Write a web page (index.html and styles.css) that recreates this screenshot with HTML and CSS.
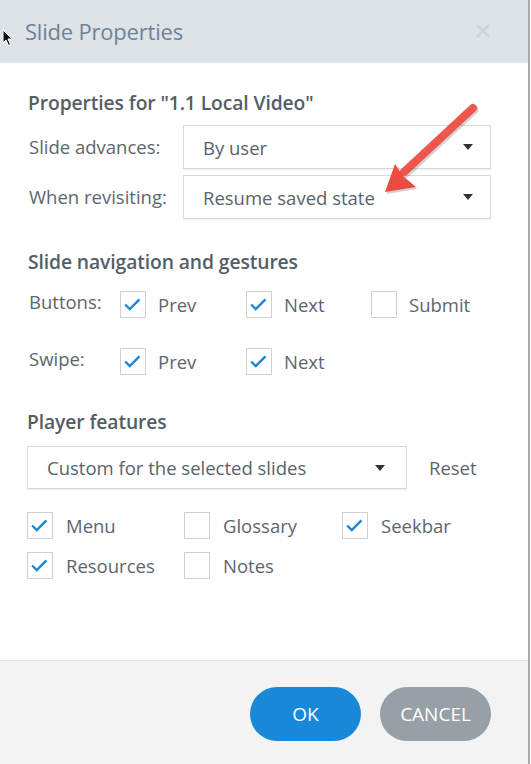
FILE: index.html
```html
<!DOCTYPE html>
<html lang="en">
<head>
<meta charset="utf-8">
<title>Slide Properties</title>
<link rel="stylesheet" href="styles.css">
</head>
<body>
<div class="dialog">
  <header class="header">
    <h1 class="title">Slide Properties</h1>
    <svg class="close" viewBox="0 0 14 14" width="14" height="14"><path d="M1 1 L13 13 M13 1 L1 13"/></svg>
  </header>
  <main class="content">
    <h2 class="heading">Properties for "1.1 Local Video"</h2>
    <div class="props">
      <span class="label">Slide advances:</span>
      <div class="select"><span>By user</span><span class="caret"></span></div>
      <span class="label">When revisiting:</span>
      <div class="select"><span>Resume saved state</span><span class="caret"></span></div>
    </div>

    <h2 class="heading heading-nav">Slide navigation and gestures</h2>
    <div class="nav">
      <span class="nav-label">Buttons:</span>
      <label class="check"><span class="box on"><svg viewBox="0 0 26 26"><polyline points="4.5,13 9.5,18 20,7.5"/></svg></span>Prev</label>
      <label class="check"><span class="box on"><svg viewBox="0 0 26 26"><polyline points="4.5,13 9.5,18 20,7.5"/></svg></span>Next</label>
      <label class="check"><span class="box"></span>Submit</label>
      <span class="nav-label">Swipe:</span>
      <label class="check"><span class="box on"><svg viewBox="0 0 26 26"><polyline points="4.5,13 9.5,18 20,7.5"/></svg></span>Prev</label>
      <label class="check"><span class="box on"><svg viewBox="0 0 26 26"><polyline points="4.5,13 9.5,18 20,7.5"/></svg></span>Next</label>
    </div>

    <h2 class="heading heading-player">Player features</h2>
    <div class="player-row">
      <div class="select select-wide"><span>Custom for the selected slides</span><span class="caret"></span></div>
      <span class="reset">Reset</span>
    </div>
    <div class="features">
      <label class="check"><span class="box on"><svg viewBox="0 0 26 26"><polyline points="4.5,13 9.5,18 20,7.5"/></svg></span>Menu</label>
      <label class="check"><span class="box"></span>Glossary</label>
      <label class="check"><span class="box on"><svg viewBox="0 0 26 26"><polyline points="4.5,13 9.5,18 20,7.5"/></svg></span>Seekbar</label>
      <label class="check"><span class="box on"><svg viewBox="0 0 26 26"><polyline points="4.5,13 9.5,18 20,7.5"/></svg></span>Resources</label>
      <label class="check"><span class="box"></span>Notes</label>
    </div>
  </main>
  <footer class="footer">
    <button class="btn btn-ok">OK</button>
    <button class="btn btn-cancel">CANCEL</button>
  </footer>

  <svg class="annot-arrow" viewBox="0 0 531 764" width="531" height="764">
    <defs>
      <linearGradient id="ag" x1="0" y1="0" x2="1" y2="1">
        <stop offset="0" stop-color="#f4685d"/>
        <stop offset="1" stop-color="#e8443c"/>
      </linearGradient>
    </defs>
    <g transform="translate(1.5,2)" opacity="0.25" fill="#555" stroke="#555">
      <line x1="473" y1="108" x2="404" y2="172" stroke-width="8" stroke-linecap="round"/>
      <path d="M385 192 L395 164 L403 176 L416 187 Z" stroke="none"/>
    </g>
    <line x1="473" y1="108" x2="404" y2="172" stroke="url(#ag)" stroke-width="8" stroke-linecap="round"/>
    <path d="M385 192 L395 164 L403 176 L416 187 Z" fill="#ec4b42"/>
  </svg>

  <svg class="cursor" viewBox="0 0 12 18" width="12" height="18">
    <path d="M1 1 L1 14 L4 11 L6.5 16.5 L8.5 15.5 L6 10 L10 10 Z" fill="#111" stroke="#fff" stroke-width="1"/>
  </svg>
</div>
</body>
</html>
```

FILE: styles.css
```css
* { box-sizing: border-box; }

html, body {
  margin: 0;
  padding: 0;
  background: #ffffff;
}

body {
  width: 531px;
  height: 764px;
  overflow: hidden;
  font-family: "Open Sans", "Noto Sans", "DejaVu Sans", sans-serif;
  color: #5d666f;
}

.dialog {
  position: relative;
  width: 530px;
  height: 764px;
  display: flex;
  flex-direction: column;
  border-right: 2px solid #a8abae;
  background: #ffffff;
}

.header {
  height: 63px;
  flex: none;
  background: #dee3e8;
  display: flex;
  align-items: center;
  justify-content: space-between;
  padding: 0 38px 2px 25px;
}

.title {
  margin: 0;
  font-size: 22px;
  font-weight: 400;
  color: #6f8295;
  letter-spacing: -0.2px;
}

.close {
  fill: none;
  stroke: #cfd5da;
  stroke-width: 2.6;
}

.content {
  flex: 1;
  padding: 27px 37px 0 28px;
}

.heading {
  margin: 0;
  font-size: 19.3px;
  line-height: 26px;
  font-weight: 600;
  color: #545d66;
  letter-spacing: -0.1px;
}

.heading-nav { margin-top: 30px; }
.heading-player { margin-top: 34px; margin-left: -1px; }

.props {
  margin-top: 9px;
  display: grid;
  grid-template-columns: 155px 308px;
  row-gap: 6px;
  align-items: center;
}

.label {
  font-size: 18.5px;
  padding-left: 1px;
  margin-top: -2px;
}

.select {
  height: 44px;
  border: 1px solid #d5dade;
  box-shadow: 0 1px 1px rgba(0, 0, 0, 0.06);
  background: #ffffff;
  display: flex;
  align-items: center;
  justify-content: space-between;
  padding: 0 17px 0 19px;
  font-size: 18.5px;
  color: #5a636b;
}

.caret {
  width: 0;
  height: 0;
  border-left: 5.5px solid transparent;
  border-right: 5.5px solid transparent;
  border-top: 6px solid #2f3337;
}

.nav {
  margin-top: 16px;
  display: grid;
  grid-template-columns: 92px 126px 125px 120px;
  grid-auto-rows: 27px;
  row-gap: 30px;
}

.nav-label {
  font-size: 18.5px;
  line-height: 22px;
  padding-left: 1px;
}

.check {
  display: flex;
  align-items: center;
  gap: 12px;
  font-size: 18.5px;
  color: #5d666f;
}

.box {
  width: 26px;
  height: 27px;
  flex: none;
  border: 1.5px solid #cdd2d7;
  background: #ffffff;
  display: flex;
  align-items: center;
  justify-content: center;
}

.box svg {
  width: 25px;
  height: 25px;
  fill: none;
  stroke: #1b86d6;
  stroke-width: 2.6;
}

.player-row {
  margin-top: 11px;
  margin-left: -1px;
  display: flex;
  align-items: center;
  gap: 22px;
}

.select-wide {
  width: 380px;
  height: 43px;
  padding-left: 19px;
  padding-right: 21px;
}

.reset {
  font-size: 18.5px;
  color: #5d666f;
}

.features {
  margin-top: 23px;
  margin-left: -1px;
  display: grid;
  grid-template-columns: 157px 158px 120px;
  grid-auto-rows: 27px;
  row-gap: 13px;
}

.features .check { gap: 13px; }

.footer {
  height: 104px;
  flex: none;
  background: #f3f3f3;
  border-top: 1px solid #dfe4e9;
  display: flex;
  justify-content: flex-end;
  align-items: flex-start;
  gap: 19px;
  padding: 26px 37px 0 0;
}

.btn {
  width: 111px;
  height: 54px;
  border: none;
  border-radius: 27px;
  font-family: "Open Sans", "Noto Sans", sans-serif;
  font-size: 19px;
  font-weight: 400;
  color: #ffffff;
}

.btn-ok { background: #1a88d8; font-weight: 500; }
.btn-cancel { background: #97a0a7; }

.annot-arrow {
  position: absolute;
  left: 0;
  top: 0;
  pointer-events: none;
}

.cursor {
  position: absolute;
  left: 2px;
  top: 29px;
}
```
